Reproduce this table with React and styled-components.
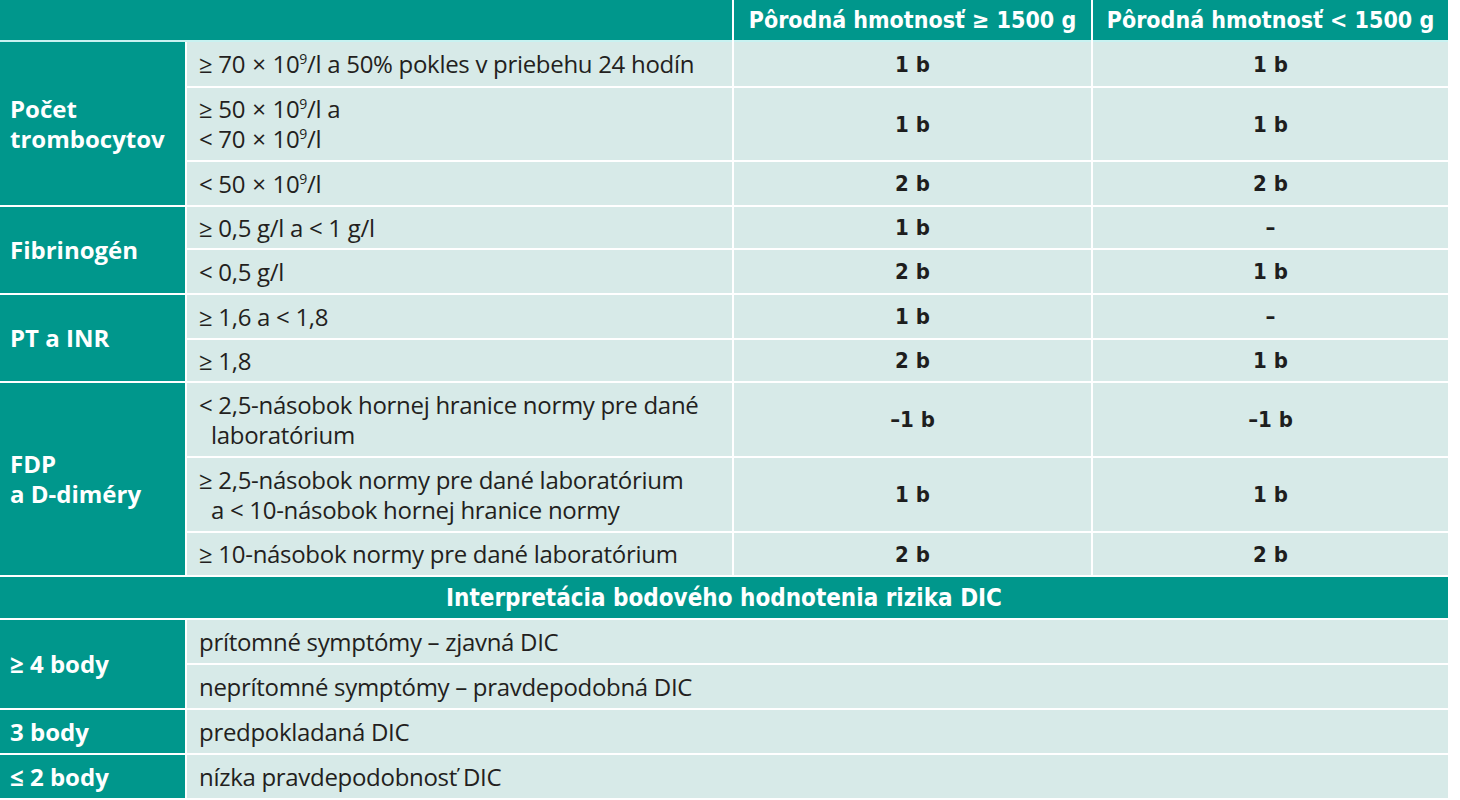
import styled, { createGlobalStyle } from 'styled-components';

const GlobalStyle = createGlobalStyle`
  body {
    margin: 0;
    background: #ffffff;
    font-family: 'Open Sans', Lato, sans-serif;
  }
`;

const TEAL = '#00978c';
const LIGHT = '#d7eae8';

const Table = styled.div`
  display: grid;
  width: 1448px;
  grid-template-columns: 185px 545px 357px 355px;
  grid-template-rows: 40px 44px 72px 43px 41px 43px 43px 41px 73px 73px 42px 41px 43px 43px 43px 43px;
  gap: 2px;
  background: #ffffff;
`;

const HeadCell = styled.div`
  grid-column: ${(p) => p.$span || 'auto'};
  background: ${TEAL};
  color: #ffffff;
  display: flex;
  align-items: center;
  justify-content: center;
  font-family: 'Liberation Sans Narrow', 'DejaVu Sans Condensed', Roboto, sans-serif;
  font-weight: 700;
  font-size: ${(p) => p.$size || 23}px;
  border-bottom: ${(p) => (p.$line ? '2px solid #c9f2f1' : 'none')};
  margin-bottom: ${(p) => (p.$line ? '-2px' : '0')};
`;

const Label = styled.div`
  grid-row: ${(p) => p.$rows || 'auto'};
  background: ${TEAL};
  color: #ffffff;
  display: flex;
  align-items: center;
  padding-left: 10px;
  font-family: 'Open Sans', Lato, sans-serif;
  font-weight: 700;
  font-size: 24px;
  line-height: 30px;
`;

const Criterion = styled.div`
  grid-column: ${(p) => p.$span || 'auto'};
  background: ${LIGHT};
  color: #231f20;
  display: flex;
  align-items: center;
  padding-left: ${(p) => (p.$hang ? 24 : 12)}px;
  font-family: 'Open Sans', Lato, sans-serif;
  font-size: 24px;
  line-height: 30px;
  letter-spacing: -0.3px;
  white-space: nowrap;
  & > span {
    display: block;
    text-indent: ${(p) => (p.$hang ? -12 : 0)}px;
  }
`;

const Score = styled.div`
  background: ${LIGHT};
  color: #1e1e1e;
  display: flex;
  align-items: center;
  justify-content: center;
  font-family: 'Liberation Sans Narrow', 'DejaVu Sans Condensed', Roboto, sans-serif;
  font-weight: 700;
  font-size: 22px;
`;

const Sup = styled.sup`
  font-size: 14px;
  vertical-align: 9px;
  line-height: 0;
`;

const Times = styled.span`
  margin: 0 1px;
`;

const e9 = <Sup>9</Sup>;
const x = <Times>×</Times>;

const scoring = [
  {
    label: <>Počet<br />trombocytov</>,
    rows: [
      [<>≥ 70 {x} 10{e9}/l a 50% pokles v priebehu 24 hodín</>, '1 b', '1 b'],
      [<>≥ 50 {x} 10{e9}/l a<br />&lt; 70 {x} 10{e9}/l</>, '1 b', '1 b'],
      [<>&lt; 50 {x} 10{e9}/l</>, '2 b', '2 b'],
    ],
  },
  {
    label: 'Fibrinogén',
    rows: [
      ['≥ 0,5 g/l a < 1 g/l', '1 b', '–'],
      ['< 0,5 g/l', '2 b', '1 b'],
    ],
  },
  {
    label: 'PT a INR',
    rows: [
      ['≥ 1,6 a < 1,8', '1 b', '–'],
      ['≥ 1,8', '2 b', '1 b'],
    ],
  },
  {
    label: <>FDP<br />a D-diméry</>,
    rows: [
      [<>&lt; 2,5-násobok hornej hranice normy pre dané<br />laboratórium</>, '–1 b', '–1 b', true],
      [<>≥ 2,5-násobok normy pre dané laboratórium<br />a &lt; 10-násobok hornej hranice normy</>, '1 b', '1 b', true],
      ['≥ 10-násobok normy pre dané laboratórium', '2 b', '2 b', true],
    ],
  },
];

const interpretation = [
  { label: '≥ 4 body', rows: ['prítomné symptómy – zjavná DIC', 'neprítomné symptómy – pravdepodobná DIC'] },
  { label: '3 body', rows: ['predpokladaná DIC'] },
  { label: '≤ 2 body', rows: ['nízka pravdepodobnosť DIC'] },
];

export default function App() {
  return (
    <>
      <GlobalStyle />
      <Table>
        <HeadCell $span="span 2" $line />
        <HeadCell $line>Pôrodná hmotnosť ≥ 1500 g</HeadCell>
        <HeadCell $line>Pôrodná hmotnosť &lt; 1500 g</HeadCell>

        {scoring.map((group, gi) =>
          group.rows.map((row, ri) => (
            <Row key={`${gi}-${ri}`} label={ri === 0 ? group.label : null} span={group.rows.length} row={row} />
          ))
        )}

        <HeadCell $span="1 / -1" $size={24}>Interpretácia bodového hodnotenia rizika DIC</HeadCell>

        {interpretation.map((group, gi) =>
          group.rows.map((text, ri) => (
            <InterpRow key={`i${gi}-${ri}`} label={ri === 0 ? group.label : null} span={group.rows.length} text={text} />
          ))
        )}
      </Table>
    </>
  );
}

function Row({ label, span, row }) {
  const [criterion, big, small, hang] = row;
  return (
    <>
      {label && <Label $rows={`span ${span}`}><span>{label}</span></Label>}
      <Criterion $hang={hang}><span>{criterion}</span></Criterion>
      <Score>{big}</Score>
      <Score>{small}</Score>
    </>
  );
}

function InterpRow({ label, span, text }) {
  return (
    <>
      {label && <Label $rows={`span ${span}`}>{label}</Label>}
      <Criterion $span="span 3"><span>{text}</span></Criterion>
    </>
  );
}
